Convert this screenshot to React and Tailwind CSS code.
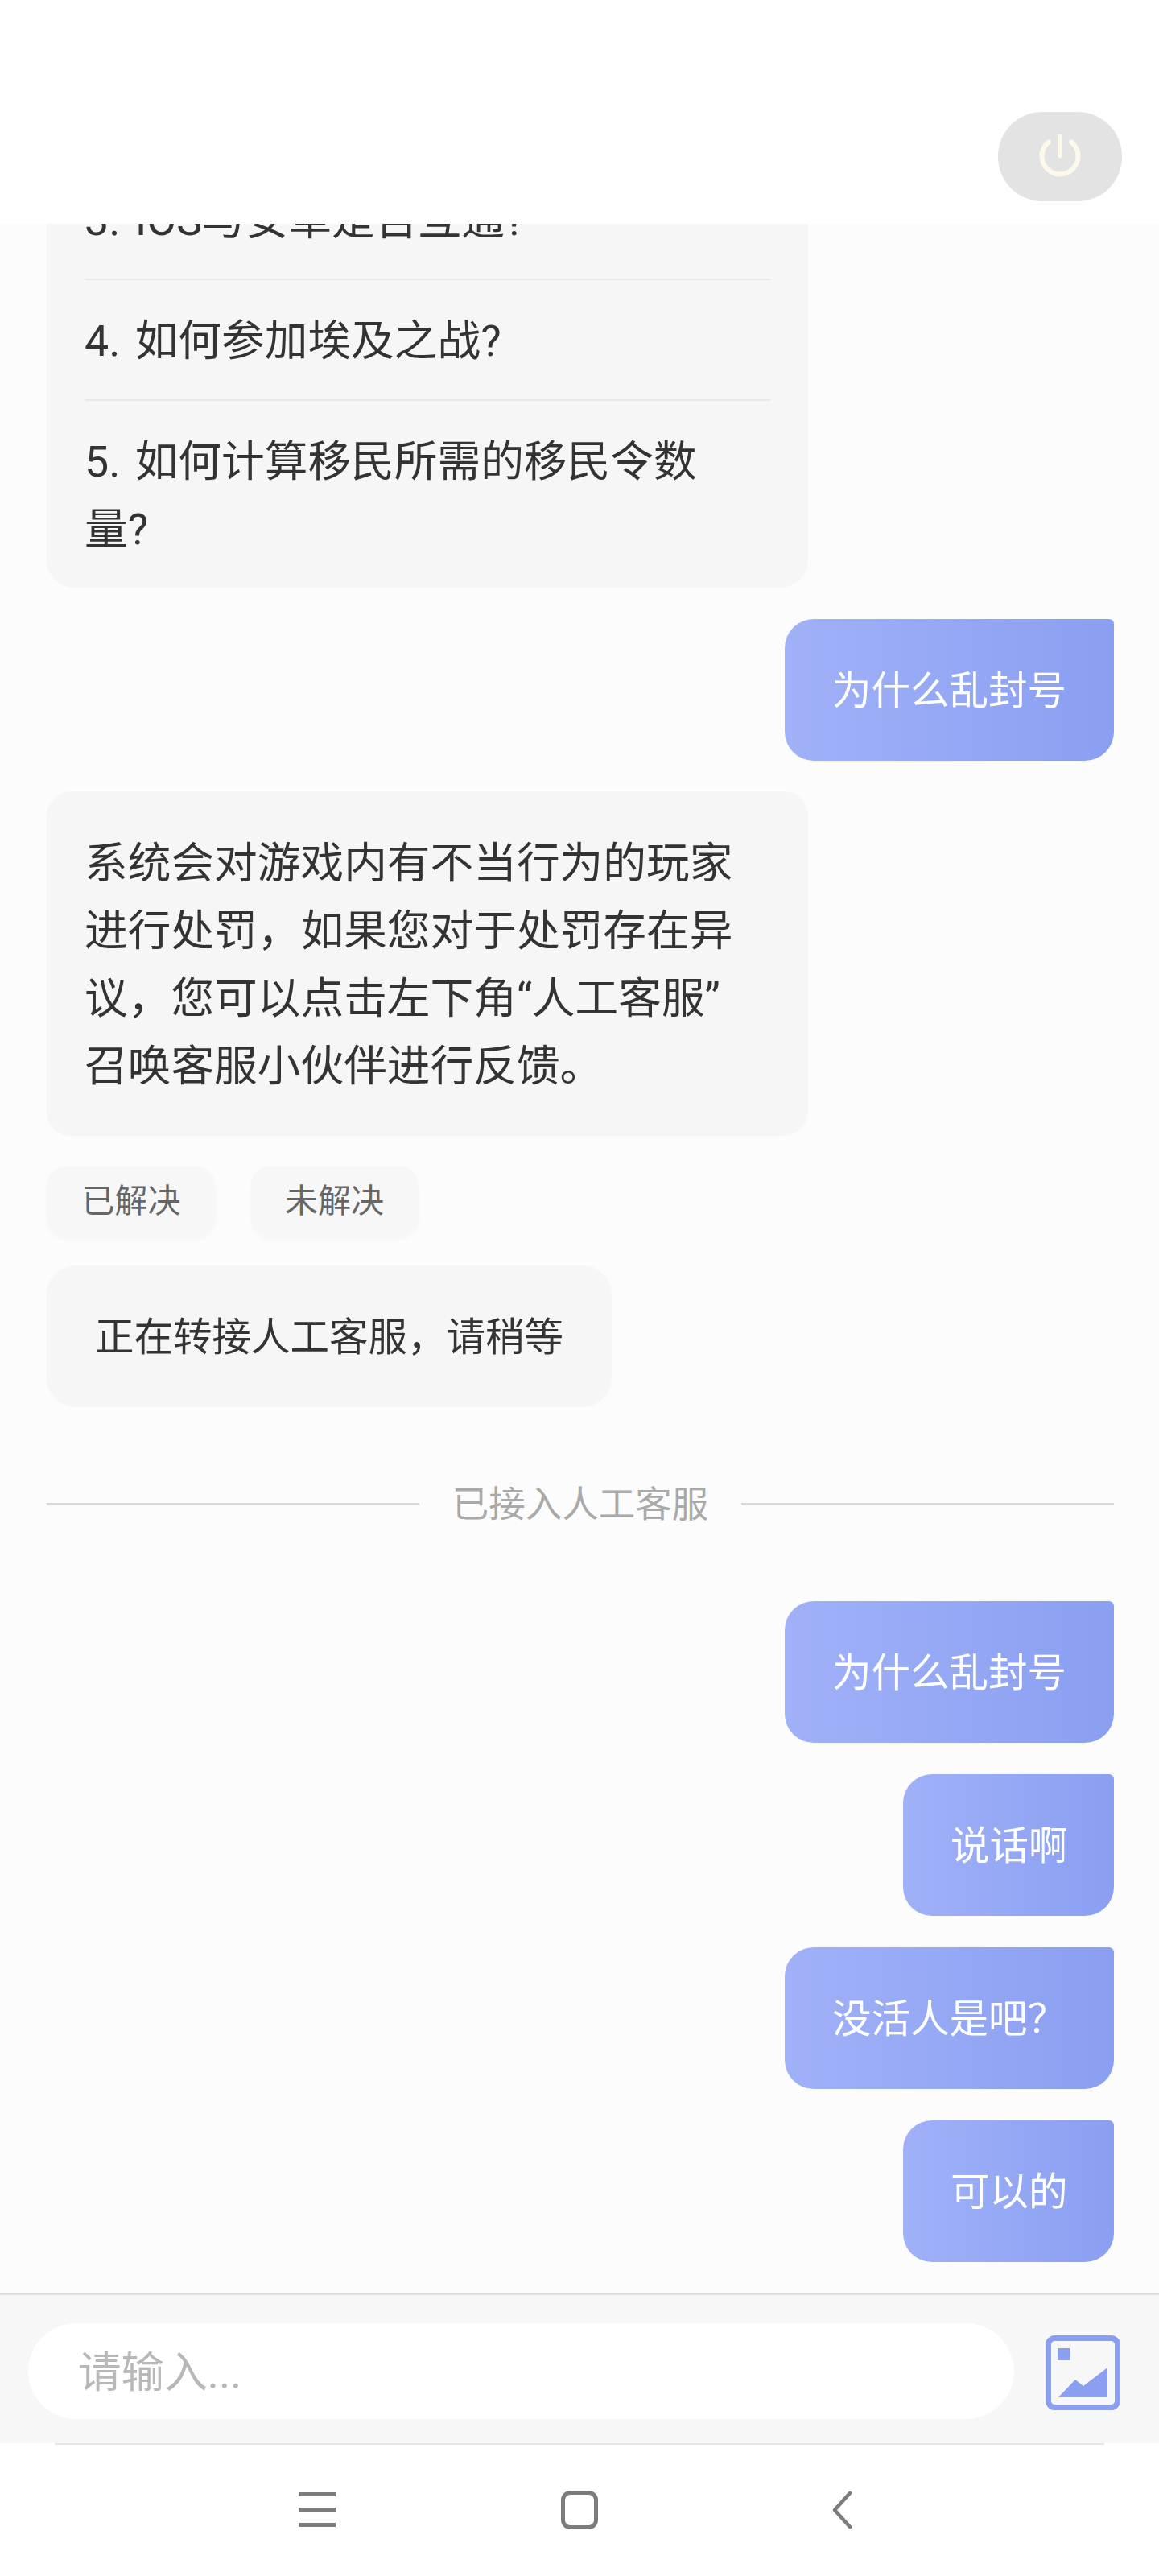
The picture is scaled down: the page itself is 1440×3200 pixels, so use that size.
import React from "react";

const UserBubble = ({ children, className = "" }) => (
  <div className={`shrink-0 self-end h-[176px] flex items-center px-[59px] pt-[4px] mr-[56px] text-[48.5px] leading-none whitespace-nowrap text-white rounded-[36px] rounded-tr-[6px] bg-gradient-to-r from-[#a0b1f8] to-[#8a9ff1] ${className}`}>
    {children}
  </div>
);

const Row = ({ children, border = false }) => (
  <div className={`pt-[34px] pb-[30px] text-[53.7px] leading-[84px] text-[#333333] [word-spacing:5px] ${border ? "border-b-2 border-[#e9e9e9]" : ""}`}>
    {children}
  </div>
);

export default function App() {
  return (
    <div lang="zh-CN" className="w-[1440px] h-[3200px] flex flex-col bg-white font-['Roboto','Noto_Sans_CJK_SC',sans-serif]">
      <header className="shrink-0 h-[278px] bg-white flex items-start justify-end pt-[139px] pr-[46px]">
        <button className="w-[154px] h-[111px] rounded-[55px] bg-[#e3e3e3] flex items-center justify-center">
          <svg width="56" height="56" viewBox="0 3 56 56" fill="none" stroke="#fdf9ea" strokeWidth="6" strokeLinecap="round">
            <path d="M14 12.4 A 22.5 22.5 0 1 0 42 12.4" />
            <path d="M28 5 V 29" />
          </svg>
        </button>
      </header>

      <main className="flex-1 min-h-0 overflow-hidden flex flex-col justify-end bg-[#fcfcfc] pb-[38px]">
        <div className="shrink-0 ml-[58px] w-[946px] px-[47px] rounded-[34px] bg-[#f6f6f6]">
          <Row border>3. IOS与安卓是否互通?</Row>
          <Row border>4. 如何参加埃及之战?</Row>
          <Row>
            5. 如何计算移民所需的移民令数<br />
            量?
          </Row>
        </div>

        <UserBubble className="mt-[39px]">为什么乱封号</UserBubble>

        <div className="shrink-0 mt-[38px] ml-[58px] w-[946px] px-[47px] pt-[48px] pb-[44px] rounded-[30px] bg-[#f6f6f6] text-[53.7px] leading-[84px] text-[#333333]">
          系统会对游戏内有不当行为的玩家<br />
          进行处罚，如果您对于处罚存在异<br />
          议，您可以点击左下角“人工客服”<br />
          召唤客服小伙伴进行反馈。
        </div>

        <div className="shrink-0 mt-[38px] ml-[58px] flex gap-[43px]">
          <div className="w-[210px] h-[87px] flex items-center justify-center rounded-[24px] bg-[#f7f7f7] shadow-[0_5px_5px_rgba(0,0,0,0.02)] text-[41px] leading-none text-[#666666]">已解决</div>
          <div className="w-[209px] h-[87px] flex items-center justify-center rounded-[24px] bg-[#f7f7f7] shadow-[0_5px_5px_rgba(0,0,0,0.02)] text-[41px] leading-none text-[#666666]">未解决</div>
        </div>

        <div className="shrink-0 self-start mt-[36px] ml-[58px] h-[176px] flex items-center px-[60px] pt-[4px] rounded-[36px] bg-[#f6f6f6] text-[48.5px] leading-none text-[#333333]">
          正在转接人工客服，请稍等
        </div>

        <div className="shrink-0 mt-[90px] mb-[91px] mr-[56px] ml-[58px] h-[60px] flex items-center gap-[41px]">
          <div className="flex-1 h-[3px] bg-[#d9d9d9]" />
          <span className="pt-[3px] text-[45.5px] leading-none text-[#a9a9a9]">已接入人工客服</span>
          <div className="flex-1 h-[3px] bg-[#d9d9d9]" />
        </div>

        <UserBubble>为什么乱封号</UserBubble>
        <UserBubble className="mt-[39px] w-[262px]">说话啊</UserBubble>
        <UserBubble className="mt-[39px]">没活人是吧？</UserBubble>
        <UserBubble className="mt-[39px] w-[262px]">可以的</UserBubble>
      </main>

      <footer className="shrink-0 h-[187px] border-t-[3px] border-[#dddddd] bg-[#f7f7f7] flex items-start pt-[35px] pl-[35px] gap-[39px]">
        <input
          readOnly
          placeholder="请输入..."
          className="w-[1225px] h-[119px] rounded-[60px] bg-white pl-[62px] pr-[40px] pt-[4px] text-[53.6px] outline-none placeholder:text-[#b8b8b8]"
        />
        <svg className="mt-[15px] shrink-0" width="93" height="93" viewBox="0 0 93 93" fill="none">
          <rect x="3.5" y="3.5" width="86" height="86" rx="8" stroke="#8b9ff0" strokeWidth="7" />
          <rect x="15" y="16" width="16" height="15" fill="#8b9ff0" />
          <path d="M16 77 L37 55 L47 63 L77 40 V77 Z" fill="#8b9ff0" />
        </svg>
      </footer>

      <nav className="shrink-0 h-[165px] bg-white relative flex items-center justify-center">
        <div className="absolute top-0 left-[68px] right-[68px] h-[2px] bg-[#e6e6e6]" />
        <div className="w-[326px] flex justify-center">
          <svg width="46" height="44" viewBox="0 0 46 44" fill="#7c7c7c">
            <rect x="0" y="0" width="46" height="5" />
            <rect x="0" y="19" width="46" height="5" />
            <rect x="0" y="38" width="46" height="5" />
          </svg>
        </div>
        <div className="w-[326px] flex justify-center">
          <svg width="46" height="48" viewBox="0 0 46 48" fill="none">
            <rect x="2.5" y="2.5" width="41" height="43" rx="9" stroke="#7c7c7c" strokeWidth="5" />
          </svg>
        </div>
        <div className="w-[326px] flex justify-center">
          <svg width="24" height="46" viewBox="0 0 24 46" fill="none">
            <path d="M22 2 L3 23 L22 44" stroke="#7c7c7c" strokeWidth="4.5" strokeLinecap="round" strokeLinejoin="round" />
          </svg>
        </div>
      </nav>
    </div>
  );
}
